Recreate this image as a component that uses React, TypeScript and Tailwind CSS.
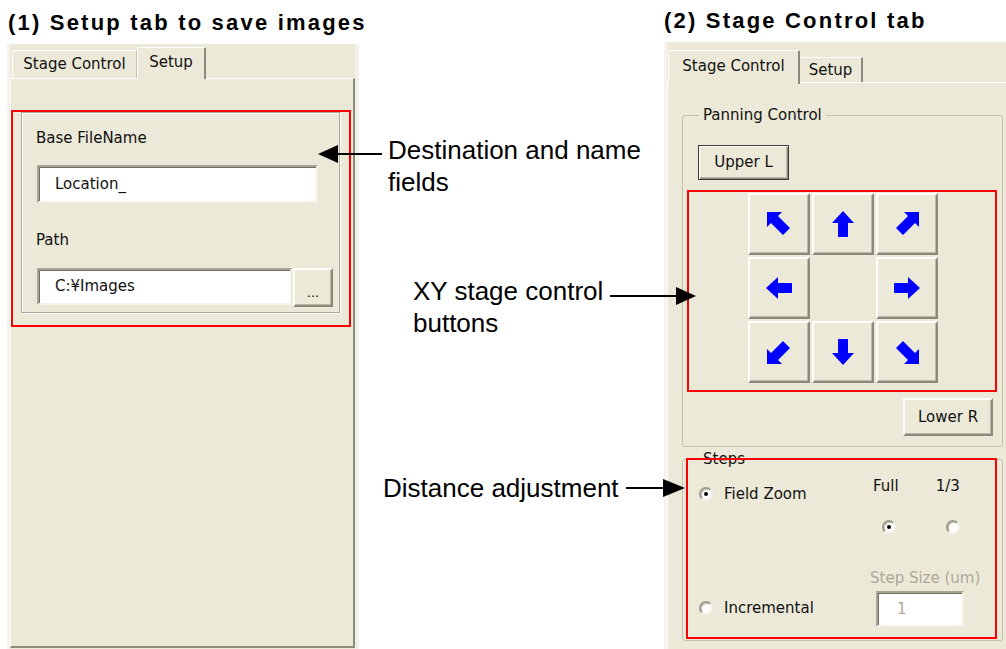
import React from "react";

type Dir = "n" | "s" | "e" | "w" | "nw" | "ne" | "sw" | "se";

// classic win32 bevels
const raised =
  "bg-[#ece9d8] border-2 border-t-white border-l-white border-r-[#8c8a7c] border-b-[#8c8a7c] shadow-[inset_-1px_-1px_0_#bcb9a9]";
const sunken =
  "bg-white border-2 border-t-[#a7a595] border-l-[#a7a595] border-r-[#f4f2e8] border-b-[#f4f2e8] shadow-[inset_1px_1px_0_#716f64]";

const rotations: Record<Dir, string> = {
  n: "",
  e: "rotate-90",
  s: "rotate-180",
  w: "-rotate-90",
  nw: "",
  ne: "rotate-90",
  se: "rotate-180",
  sw: "-rotate-90",
};

function Arrow({ dir }: { dir: Dir }) {
  if (dir.length === 2) {
    return (
      <svg width="24" height="24" viewBox="0 0 24 24" className={rotations[dir]}>
        <path d="M0 0H15L11 4 23 16 16 23 4 11 0 15Z" fill="#0000ff" />
      </svg>
    );
  }
  return (
    <svg width="22" height="26" viewBox="0 0 22 26" className={rotations[dir]}>
      <path d="M6 26V12H0L11 0 22 12H16V26Z" fill="#0000ff" />
    </svg>
  );
}

function Radio({ on }: { on?: boolean }) {
  return (
    <span className="inline-flex w-[14px] h-[14px] shrink-0 items-center justify-center rounded-full bg-white border-2 border-t-[#9d9b8c] border-l-[#9d9b8c] border-r-[#f4f2e8] border-b-[#f4f2e8] shadow-[inset_1px_1px_0_#c9c7b9]">
      {on && <span className="w-[4px] h-[4px] rounded-full bg-black" />}
    </span>
  );
}

function PadButton({ dir }: { dir?: Dir }) {
  if (!dir) return <div />;
  return (
    <div className={`${raised} flex items-center justify-center`}>
      <Arrow dir={dir} />
    </div>
  );
}

export default function App() {
  const pad: (Dir | undefined)[] = ["nw", "n", "ne", "w", undefined, "e", "sw", "s", "se"];

  return (
    <div className="relative flex w-[1006px] h-[649px] overflow-hidden bg-white text-black">
      {/* (1) Setup tab */}
      <div className="ml-[7px] w-[352px] shrink-0 flex flex-col">
        <div className="h-[44px] pt-[11px] pl-[1px] font-['Liberation_Sans',Arial,sans-serif] font-bold text-[22px] leading-[24px] tracking-[2.2px] whitespace-nowrap">
          (1) Setup tab to save images
        </div>
        <div className="flex-1 flex flex-col bg-[#ece9d8] border-l-[3px] border-l-[#f5f3ea] border-r-[4px] border-r-[#f3f1e6] font-['DejaVu_Sans',sans-serif] text-[15px] text-[#111]">
          <div className="h-[34px] flex items-end pl-[2px]">
            <div className="w-[125px] h-[28px] border-t border-l border-t-white border-l-white border-r border-r-[#c5c2b2] rounded-tl-[3px] flex items-center justify-center">
              Stage Control
            </div>
            <div className="relative z-10 -mb-[1px] w-[69px] h-[32px] bg-[#ece9d8] border-t border-l border-t-white border-l-white border-r-2 border-r-[#8c8a7c] rounded-t-[2px] flex items-center justify-center pb-[3px]">
              Setup
            </div>
          </div>
          <div className="flex-1 mb-[1px] border-t border-l border-t-white border-l-white border-r-2 border-b-2 border-r-[#8c8a7c] border-b-[#8c8a7c]">
            <div className="mt-[31px] w-[340px] h-[217px] border-2 border-[#ff0000]">
              <div className="ml-[8px] w-[319px] h-[201px] border border-[#aca899] shadow-[inset_1px_1px_0_#fff,1px_1px_0_#fff] pt-[16px] pl-[14px]">
                <div className="leading-[18px]">Base FileName</div>
                <div className={`${sunken} mt-[18px] ml-[1px] w-[281px] h-[38px] pl-[16px] flex items-center`}>
                  Location_
                </div>
                <div className="mt-[28px] leading-[18px]">Path</div>
                <div className="mt-[19px] ml-[1px] flex items-start">
                  <div className={`${sunken} w-[255px] h-[37px] pl-[16px] flex items-center`}>C:¥Images</div>
                  <div className={`${raised} ml-[1px] w-[40px] h-[39px] flex items-end justify-center pb-[6px] text-[13px] leading-[13px]`}>
                    ...
                  </div>
                </div>
              </div>
            </div>
          </div>
        </div>
      </div>

      {/* (2) Stage Control tab */}
      <div className="ml-auto w-[342px] shrink-0 flex flex-col">
        <div className="h-[42px] pt-[9px] font-['Liberation_Sans',Arial,sans-serif] font-bold text-[22px] leading-[24px] tracking-[2.2px] whitespace-nowrap">
          (2) Stage Control tab
        </div>
        <div className="flex-1 flex flex-col bg-[#ece9d8] border-l-[3px] border-l-[#f5f3ea] font-['DejaVu_Sans',sans-serif] text-[15px] text-[#111]">
          <div className="h-[40px] flex items-end pl-[1px]">
            <div className="relative z-10 -mb-[2px] w-[132px] h-[34px] bg-[#ece9d8] border-t border-l border-t-white border-l-white border-r-2 border-r-[#8c8a7c] rounded-t-[2px] flex items-center justify-center pb-[2px]">
              Stage Control
            </div>
            <div className="w-[63px] h-[25px] border-t border-t-white border-r-2 border-r-[#8c8a7c] flex items-center justify-center">
              Setup
            </div>
          </div>
          <div className="flex-1 border-t border-l border-t-white border-l-white pl-[14px] flex flex-col">
            <fieldset className="mt-[24px] w-[321px] h-[340px] m-0 p-0 min-w-0 border border-[#c3c0ae] rounded-[3px]">
              <legend className="ml-[16px] px-[4px] leading-[16px]">Panning Control</legend>
              <div className="flex flex-col">
                <div className="ml-[15px] mt-[22px] w-[91px] h-[35px] border border-[#3c3b35] shadow-[inset_1px_1px_0_#fff,inset_-1px_-1px_0_#8c8a7c,inset_-2px_-2px_0_#bcb9a9] flex items-center justify-center">
                  Upper L
                </div>
                <div className="ml-[4px] mt-[10px] w-[310px] h-[202px] border-2 border-[#ff0000] pt-[1px] pl-[59px]">
                  <div className="grid grid-cols-[62px_62px_62px] grid-rows-[62px_62px_62px] gap-[2px]">
                    {pad.map((d, i) => (
                      <PadButton key={i} dir={d} />
                    ))}
                  </div>
                </div>
                <div className={`${raised} self-end mr-[9px] mt-[6px] w-[90px] h-[38px] flex items-center justify-center`}>
                  Lower R
                </div>
              </div>
            </fieldset>

            <div className="relative mt-[4px] w-[321px]">
              <fieldset className="h-[190px] m-0 p-0 min-w-0 border border-[#c3c0ae] rounded-[3px]">
                <legend className="ml-[16px] px-[4px] leading-[16px]">Steps</legend>
                <div className="flex pl-[16px]">
                  <div className="w-[171px] flex flex-col">
                    <div className="mt-[19px] h-[16px] leading-[16px] flex items-center">
                      <Radio on />
                      <span className="ml-[11px]">Field Zoom</span>
                    </div>
                    <div className="mt-[98px] h-[16px] leading-[16px] flex items-center">
                      <Radio />
                      <span className="ml-[11px]">Incremental</span>
                    </div>
                  </div>
                  <div className="flex flex-col">
                    <div className="mt-[11px] h-[16px] leading-[16px] flex">
                      <span className="ml-[3px]">Full</span>
                      <span className="ml-[37px]">1/3</span>
                    </div>
                    <div className="mt-[26px] h-[14px] flex">
                      <span className="ml-[12px] flex"><Radio on /></span>
                      <span className="ml-[50px] flex"><Radio /></span>
                    </div>
                    <div className="mt-[36px] h-[16px] leading-[16px] text-[#aca899] whitespace-nowrap">Step Size (um)</div>
                    <div className={`${sunken} mt-[5px] ml-[6px] w-[88px] h-[36px] pl-[19px] flex items-center text-[#aca899]`}>
                      1
                    </div>
                  </div>
                </div>
              </fieldset>
              <div className="absolute left-[4px] top-[7px] w-[311px] h-[181px] border-2 border-[#ff0000] pointer-events-none" />
            </div>
          </div>
        </div>
      </div>

      {/* callouts */}
      <div className="absolute left-[388px] top-[134px] font-['Liberation_Sans',Arial,sans-serif] text-[26px] leading-[32px] whitespace-nowrap">
        Destination and name
        <br />
        fields
      </div>
      <svg className="absolute left-[316px] top-[144px]" width="68" height="20">
        <polygon points="2,10 22,1 22,19" fill="#000" />
        <line x1="22" y1="10" x2="66" y2="10" stroke="#000" strokeWidth="2" />
      </svg>

      <div className="absolute left-[413px] top-[275px] font-['Liberation_Sans',Arial,sans-serif] text-[26px] leading-[32px] whitespace-nowrap">
        XY stage control
        <br />
        buttons
      </div>
      <svg className="absolute left-[608px] top-[286px]" width="92" height="20">
        <line x1="2" y1="10" x2="70" y2="10" stroke="#000" strokeWidth="2" />
        <polygon points="68,1 88,10 68,19" fill="#000" />
      </svg>

      <div className="absolute left-[383px] top-[472px] font-['Liberation_Sans',Arial,sans-serif] text-[26px] leading-[32px] whitespace-nowrap">
        Distance adjustment
      </div>
      <svg className="absolute left-[625px] top-[478px]" width="62" height="20">
        <line x1="1" y1="10" x2="40" y2="10" stroke="#000" strokeWidth="2" />
        <polygon points="38,1 60,10 38,19" fill="#000" />
      </svg>
    </div>
  );
}
